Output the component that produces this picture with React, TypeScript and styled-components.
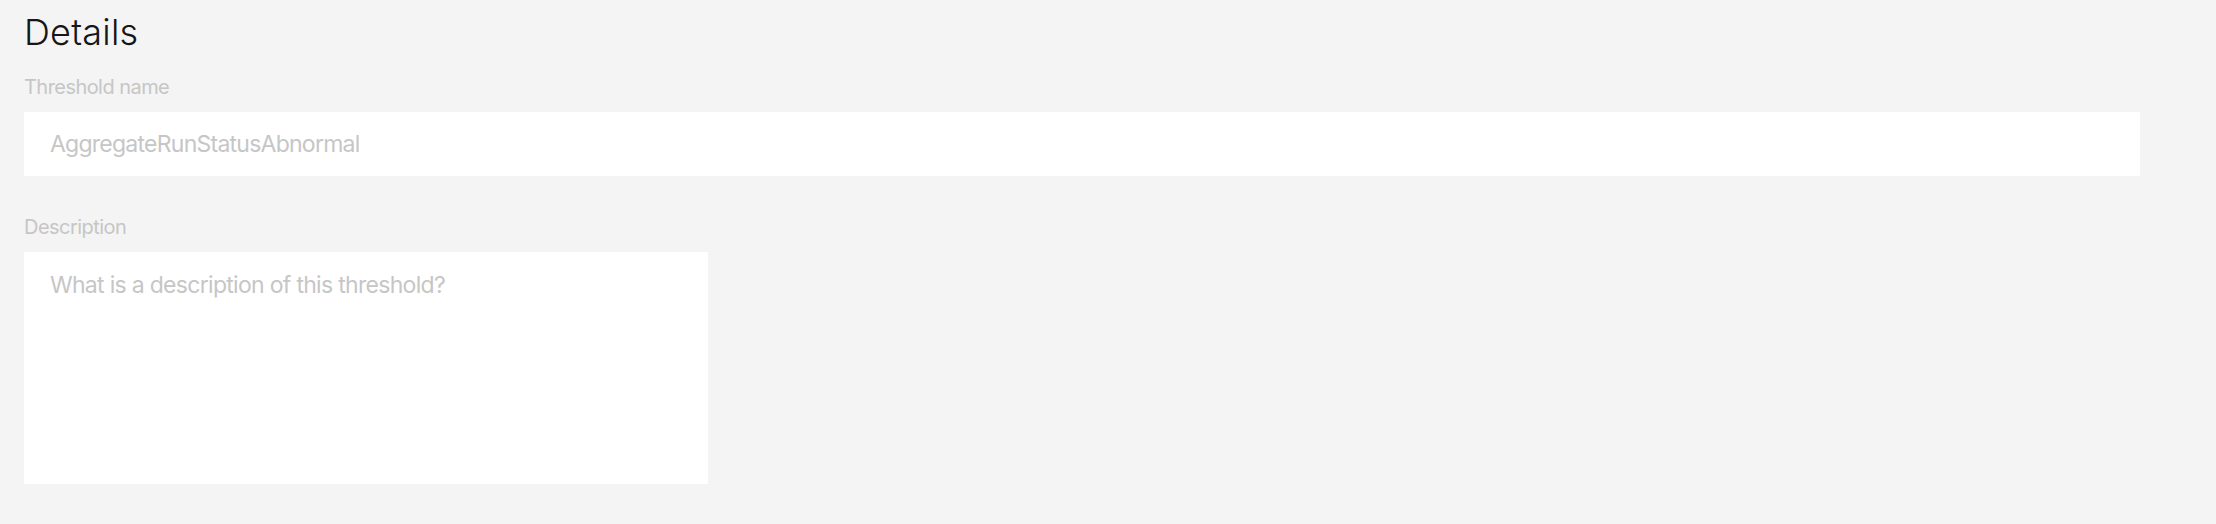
import React from "react";
import styled, { createGlobalStyle } from "styled-components";

const GlobalStyle = createGlobalStyle`
  html, body {
    margin: 0;
    padding: 0;
    background: #f4f4f4;
  }
  body {
    font-family: Inter, "Noto Sans", "Liberation Sans", sans-serif;
  }
  * { box-sizing: border-box; }
`;

const Page = styled.main`
  display: flex;
  flex-direction: column;
  padding: 15px 0 0 24px;
  width: 2140px;
`;

const Title = styled.h1`
  margin: 0 0 27px;
  font-size: 36px;
  line-height: 35px;
  font-weight: 300;
  letter-spacing: 0.2px;
  color: #161616;
`;

const Field = styled.div<{ $gap?: number }>`
  display: flex;
  flex-direction: column;
  gap: 15px;
  margin-bottom: ${(p) => p.$gap ?? 0}px;
`;

const Label = styled.label`
  font-size: 20px;
  line-height: 20px;
  font-weight: 400;
  letter-spacing: -0.55px;
  color: #c6c6c6;
`;

const TextInput = styled.input`
  width: 100%;
  height: 64px;
  border: none;
  outline: none;
  background: #ffffff;
  padding: 0 26px;
  font-family: inherit;
  font-size: 23px;
  letter-spacing: -0.75px;
  color: #c6c6c6;
  &::placeholder { color: #c6c6c6; }
`;

const TextArea = styled.textarea`
  width: 684px;
  height: 232px;
  border: none;
  outline: none;
  resize: none;
  background: #ffffff;
  padding: 19px 26px;
  font-family: inherit;
  font-size: 23px;
  line-height: 28px;
  letter-spacing: -0.7px;
  color: #161616;
  &::placeholder { color: #c6c6c6; }
`;

export default function App() {
  return (
    <>
      <GlobalStyle />
      <Page>
        <Title>Details</Title>
        <Field $gap={41}>
          <Label htmlFor="threshold-name">Threshold name</Label>
          <TextInput id="threshold-name" readOnly value="AggregateRunStatusAbnormal" />
        </Field>
        <Field>
          <Label htmlFor="description">Description</Label>
          <TextArea id="description" placeholder="What is a description of this threshold?" />
        </Field>
      </Page>
    </>
  );
}
